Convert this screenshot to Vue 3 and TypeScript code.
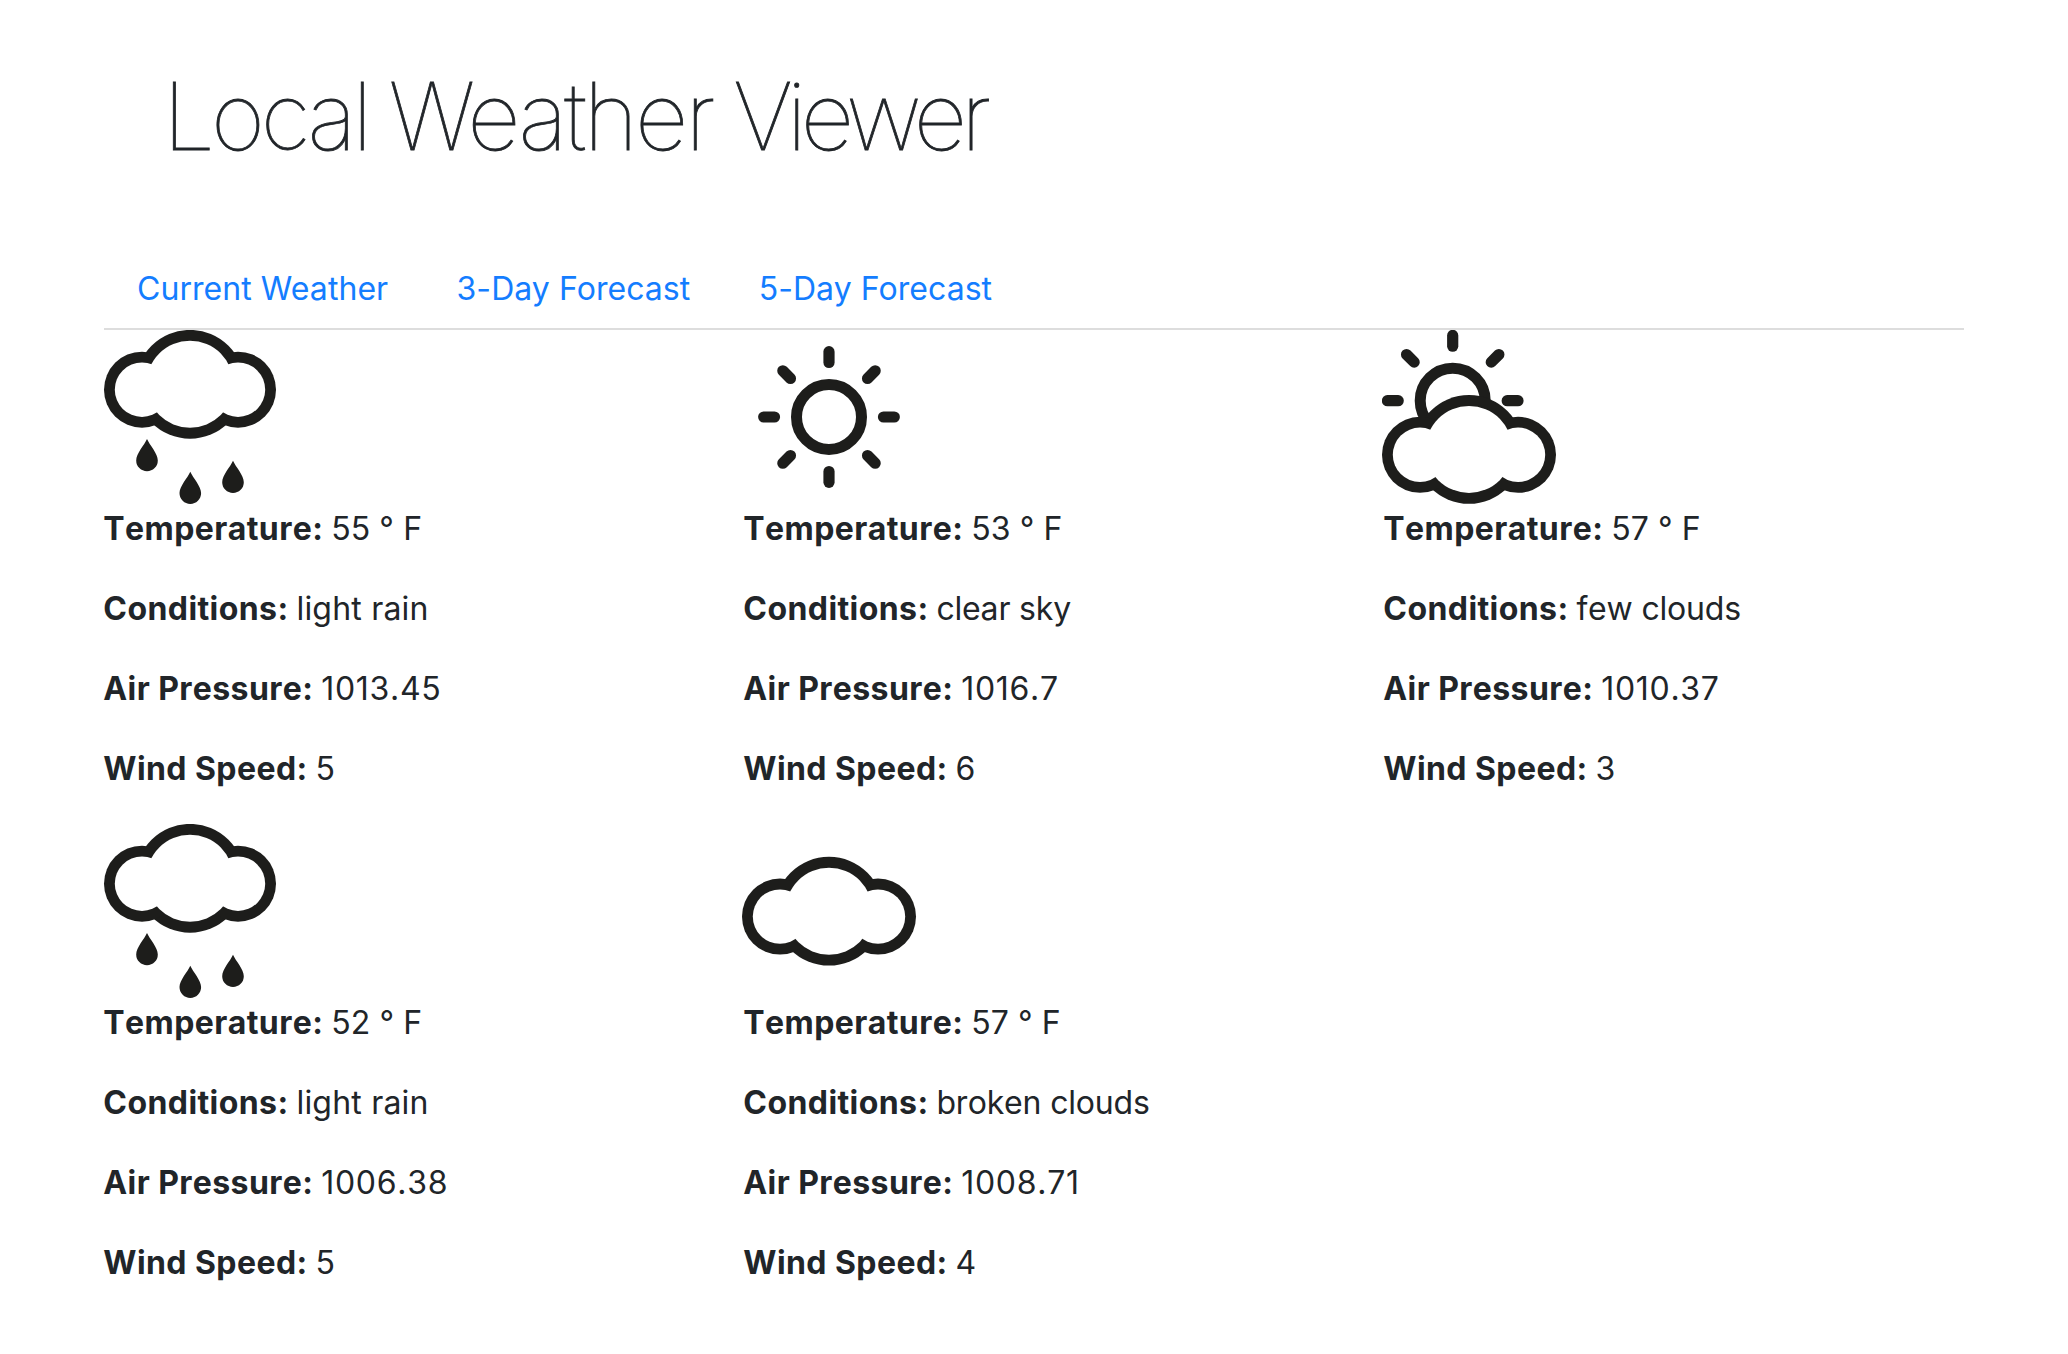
<script setup lang="ts">
type Icon = 'rain' | 'clear' | 'few' | 'cloud'

interface Forecast {
  icon: Icon
  temperature: number
  conditions: string
  pressure: number
  wind: number
}

const tabs: string[] = ['Current Weather', '3-Day Forecast', '5-Day Forecast']

const forecasts: Forecast[] = [
  { icon: 'rain', temperature: 55, conditions: 'light rain', pressure: 1013.45, wind: 5 },
  { icon: 'clear', temperature: 53, conditions: 'clear sky', pressure: 1016.7, wind: 6 },
  { icon: 'few', temperature: 57, conditions: 'few clouds', pressure: 1010.37, wind: 3 },
  { icon: 'rain', temperature: 52, conditions: 'light rain', pressure: 1006.38, wind: 5 },
  { icon: 'cloud', temperature: 57, conditions: 'broken clouds', pressure: 1008.71, wind: 4 },
]

const drop = 'M0 0C2.6 6 10.8 14.5 10.8 21.4A10.8 10.8 0 0 1 -10.8 21.4C-10.8 14.5 -2.6 6 0 0Z'
const clearRays = [0, 45, 90, 135, 180, 225, 270, 315]
const fewRays = [-90, -45, 0, 45, 90]

// Vertical centre of the cloud inside its icon box
const cloudY: Partial<Record<Icon, number>> = { rain: 54.3, few: 119.4, cloud: 87.2 }
</script>

<template>
  <main class="container">
    <h1 class="title">
      <span class="local">Local</span> <span class="weather">Weather</span> <span class="viewer">Viewer</span>
    </h1>

    <nav class="tabs">
      <a v-for="tab in tabs" :key="tab" class="tab">{{ tab }}</a>
    </nav>

    <section class="grid">
      <article v-for="(f, i) in forecasts" :key="i" class="card">
        <svg class="icon" width="176" height="174" viewBox="0 0 176 174">
          <g v-if="f.icon === 'clear'" transform="translate(87 87)">
            <circle r="32.5" class="ring" />
            <line v-for="a in clearRays" :key="a" y1="-65.3" y2="-54.5" class="ray" :transform="`rotate(${a})`" />
          </g>
          <g v-if="f.icon === 'few'" transform="translate(70.7 70.7)">
            <circle r="32.5" class="ring" />
            <line v-for="a in fewRays" :key="a" y1="-65.3" y2="-54.5" class="ray" :transform="`rotate(${a})`" />
          </g>
          <g v-if="cloudY[f.icon]" :transform="`translate(${f.icon === 'rain' ? 88 : 87} ${cloudY[f.icon]})`">
            <g class="ink">
              <circle r="54.4" />
              <circle :cx="f.icon === 'rain' ? -48 : -49" cy="5.4" r="38" />
              <circle :cx="f.icon === 'rain' ? 48 : 49" cy="5.4" r="38" />
            </g>
            <g class="paper">
              <circle r="43.5" />
              <circle :cx="f.icon === 'rain' ? -48 : -49" cy="5.4" r="27.2" />
              <circle :cx="f.icon === 'rain' ? 48 : 49" cy="5.4" r="27.2" />
            </g>
          </g>
          <g v-if="f.icon === 'rain'" class="ink">
            <path :d="drop" transform="translate(45 109)" />
            <path :d="drop" transform="translate(88.3 141.7)" />
            <path :d="drop" transform="translate(131 130.8)" />
          </g>
        </svg>
        <p><strong>Temperature:</strong> <span class="degrees">{{ f.temperature }} ° F</span></p>
        <p><strong>Conditions:</strong> <span :class="f.icon === 'rain' ? 'open' : 'words'">{{ f.conditions }}</span></p>
        <p><strong>Air Pressure:</strong> <span class="digits">{{ f.pressure }}</span></p>
        <p><strong>Wind Speed:</strong> <span class="digits">{{ f.wind }}</span></p>
      </article>
    </section>
  </main>
</template>

<style>
body {
  background: #fff;
}
</style>

<style scoped>
.container {
  box-sizing: border-box;
  width: 1860px;
  margin: 0 auto;
  padding-top: 58px;
  font-family: Inter, 'Liberation Sans', sans-serif;
  font-size: 32px;
  line-height: 48px;
  color: #212529;
}
.title {
  display: flex;
  height: 190px;
  margin: 0;
  padding-left: 58.7px;
  font-size: 93px;
  font-weight: 100;
  -webkit-text-stroke: 0.8px #212529;
  line-height: 116px;
  white-space: nowrap;
}
.local {
  letter-spacing: -4px;
}
.weather {
  margin: 0 20.7px 0 20.3px;
  letter-spacing: -3px;
}
.viewer {
  letter-spacing: -6px;
}
.tabs {
  display: flex;
  gap: 68.3px;
  padding: 17px 33px 15px;
  border-bottom: 2px solid #ddd;
}
.tab {
  color: #147dff;
  letter-spacing: 0.06px;
}
.grid {
  display: grid;
  grid-template-columns: repeat(3, 640px);
}
.card {
  height: 494px;
}
.icon {
  display: block;
  margin: 0 0 1px -2px;
}
.card p {
  margin: 0 0 32px -0.7px;
  letter-spacing: -1.1px;
  white-space: nowrap;
}
strong {
  font-weight: 700;
  letter-spacing: 0.42px;
  font-kerning: none;
}
.degrees {
  letter-spacing: 0.1px;
}
.open {
  letter-spacing: 0.2px;
}
.words {
  letter-spacing: -0.18px;
  font-kerning: none;
}
.digits {
  letter-spacing: 0.7px;
  font-kerning: none;
}
.ring {
  fill: none;
  stroke: #1d1d1b;
  stroke-width: 11;
}
.ray {
  stroke: #1d1d1b;
  stroke-width: 11.2;
  stroke-linecap: round;
}
.ink {
  fill: #1d1d1b;
}
.paper {
  fill: #fff;
}
</style>
